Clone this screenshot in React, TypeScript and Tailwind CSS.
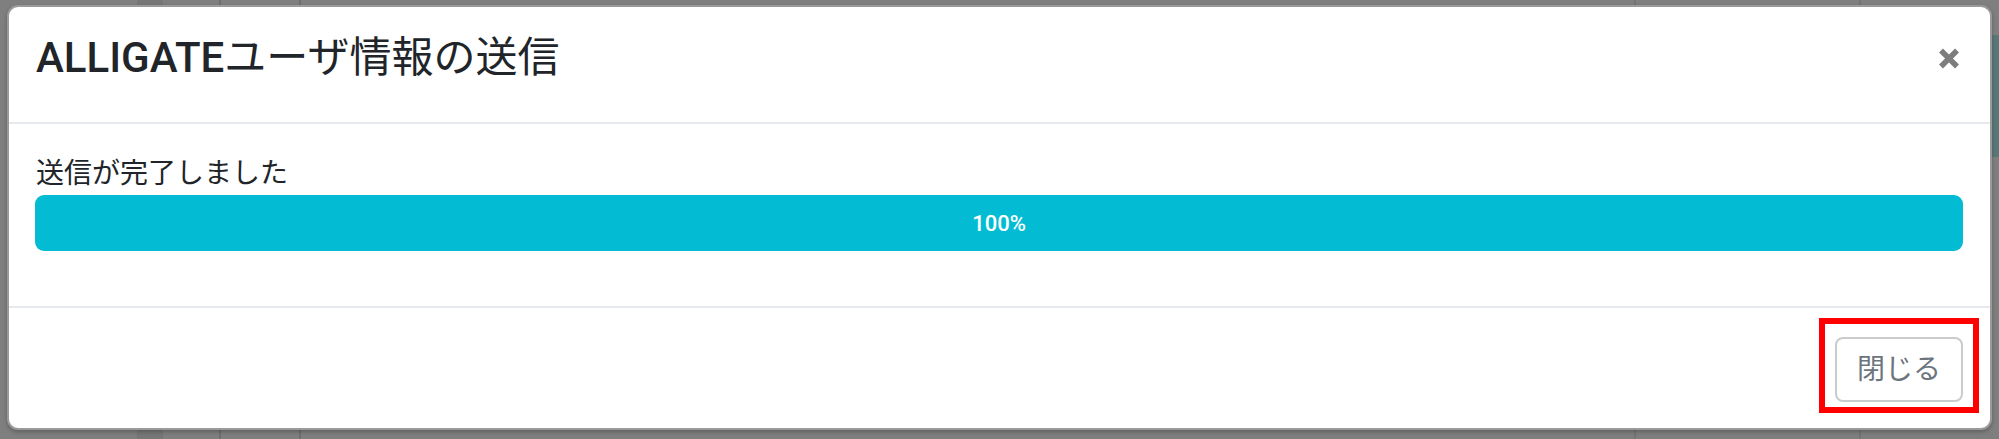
import React from "react";

const sans = '"Liberation Sans", "Noto Sans CJK JP", Arial, sans-serif';
const roboto = 'Roboto, "Noto Sans CJK JP", "Liberation Sans", sans-serif';

function CloseIcon() {
  return (
    <svg width="22" height="21" viewBox="0 0 22 21" aria-hidden="true">
      <path d="M3 2.5 L19 18.5 M19 2.5 L3 18.5" stroke="#7d7d7d" strokeWidth="5.5" fill="none" />
    </svg>
  );
}

export default function App() {
  return (
    <div className="relative w-[1999px] h-[439px] overflow-hidden bg-[#7f7f7f]" style={{ fontFamily: sans }}>
      {/* page behind the backdrop */}
      <div className="flex h-full">
        <div className="w-[137px] h-full" />
        <div className="w-[26px] h-full bg-[#777777]" />
        <div className="w-[58px] h-full border-r-2 border-[#6f6f6f]" />
        <div className="w-[80px] h-full border-r-2 border-[#6f6f6f]" />
        <div className="flex-1 h-full border-r-2 border-[#747474]" />
        <div className="w-[225px] h-full border-r-2 border-[#747474]" />
        <div className="w-[138px] h-full flex flex-col">
          <div className="h-[35px]" />
          <div className="h-[122px] bg-[#5b7879]" />
          <div className="flex-1" />
        </div>
      </div>

      {/* modal */}
      <div className="absolute left-[7px] top-[5px] w-[1985px] h-[425px] bg-white rounded-[11px] border-2 border-[#9a9a9a] shadow-[0_2px_4px_rgba(0,0,0,0.25)] flex flex-col overflow-hidden">
        <div className="h-[117px] shrink-0 border-b-2 border-[#e6e9ed] pl-[27px] pr-[30px] pt-[27px] flex items-start justify-between">
          <h1 className="text-[42px] leading-[48px] font-normal text-[#212529]" style={{ fontFamily: roboto }}>
            <span className="font-medium">ALLIGATE</span>ユーザ情報の送信
          </h1>
          <div className="mt-[14px]">
            <CloseIcon />
          </div>
        </div>

        <div className="h-[184px] shrink-0 border-b-2 border-[#e6e9ed] pl-[26px] pr-[27px] pt-[34px]">
          <p className="text-[28px] leading-[32px] text-[#212529] pl-[1px]">送信が完了しました</p>
          <div className="mt-[5px] h-[56px] rounded-[9px] bg-[#03bcd4] flex items-center justify-center">
            <span className="text-white text-[22px] font-medium" style={{ fontFamily: roboto }}>100%</span>
          </div>
        </div>

        <div className="flex-1 flex items-start justify-end pr-[27px] pt-[29px]">
          <div className="relative">
            <button className="w-[128px] h-[65px] rounded-[8px] border-2 border-[#c9cbcd] bg-white text-[#6c757d] text-[28px] leading-none flex items-center justify-center">
              閉じる
            </button>
            <div className="absolute -left-[16px] -right-[16px] -top-[19px] -bottom-[11px] border-[6px] border-[#ff0000]" />
          </div>
        </div>
      </div>
    </div>
  );
}
